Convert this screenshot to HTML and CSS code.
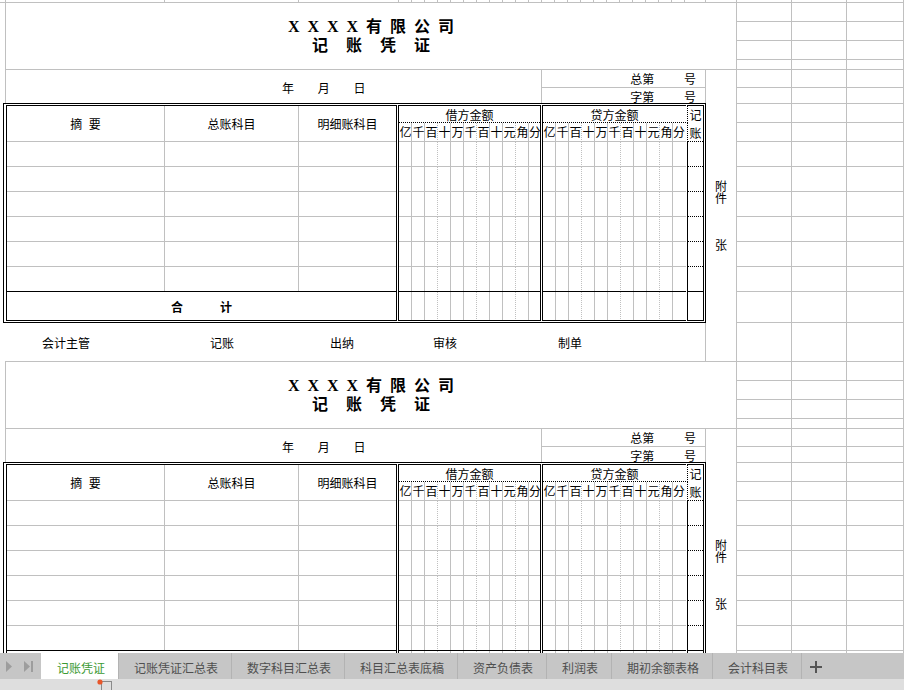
FILE: index.html
```html
<!DOCTYPE html>
<html lang="zh-CN">
<head>
<meta charset="utf-8">
<title>记账凭证</title>
<link rel="stylesheet" href="styles.css">
</head>
<body>
<div class="sheet">
  <div class="topstrip"></div>

  <section class="voucher">
    <div class="title"><div class="t1">X X X X 有 限 公 司</div><div class="t2">记 账 凭 证</div></div>
    <div class="daterow">
      <div class="date">年 月 日</div>
      <div class="nos"><div class="no">总第 号</div><div class="no">字第 号</div></div>
    </div>
    <div class="attach"><div class="fj">附件</div><div class="zhang">张</div></div>
    <div class="vt">
      <div class="lb">
        <div class="lh"><div class="c1">摘 要</div><div class="c2">总账科目</div><div class="c3">明细账科目</div></div>
        <div class="r lrow"></div><div class="r lrow"></div><div class="r lrow"></div><div class="r lrow"></div><div class="r lrow"></div>
        <div class="r6 lrow"></div>
        <div class="tot"><span>合</span><span>计</span></div>
      </div>
      <div class="db">
        <div class="ah">借方金额</div>
        <div class="dg amt"><span>亿</span><span>千</span><span>百</span><span>十</span><span>万</span><span>千</span><span>百</span><span>十</span><span>元</span><span>角</span><span>分</span></div>
        <div class="r amt"></div><div class="r amt"></div><div class="r amt"></div><div class="r amt"></div><div class="r amt"></div>
        <div class="r6 amt"></div>
        <div class="tot amt"></div>
      </div>
      <div class="cb">
        <div class="ah">贷方金额</div>
        <div class="dg amt"><span>亿</span><span>千</span><span>百</span><span>十</span><span>万</span><span>千</span><span>百</span><span>十</span><span>元</span><span>角</span><span>分</span></div>
        <div class="r amt"></div><div class="r amt"></div><div class="r amt"></div><div class="r amt"></div><div class="r amt"></div>
        <div class="r6 amt"></div>
        <div class="tot amt"></div>
      </div>
      <div class="jz">
        <div class="jh1">记</div><div class="jh2">账</div>
        <div class="jr"></div><div class="jr"></div><div class="jr"></div><div class="jr"></div><div class="jr"></div>
        <div class="jr6"></div><div class="jtot"></div>
      </div>
    </div>
    <div class="sign"><span>会计主管</span><span>记账</span><span>出纳</span><span>审核</span><span>制单</span></div>
    <div class="rgrid"><i></i><i></i><i></i><i></i><i></i><i></i><i></i><i></i><i></i><i></i><i></i><i></i><i></i><i></i><i></i><i></i><i></i><i></i><i></i><i></i><i></i><i></i><i></i><i></i><i></i><i></i><i></i><i></i><i></i><i></i><i></i><i></i><i></i><i></i><i></i><i></i><i></i><i></i><i></i><i></i><i></i><i></i><i></i><i></i><i></i><i></i><i></i><i></i></div>
  </section>

  <section class="voucher">
    <div class="title"><div class="t1">X X X X 有 限 公 司</div><div class="t2">记 账 凭 证</div></div>
    <div class="daterow">
      <div class="date">年 月 日</div>
      <div class="nos"><div class="no">总第 号</div><div class="no">字第 号</div></div>
    </div>
    <div class="attach"><div class="fj">附件</div><div class="zhang">张</div></div>
    <div class="vt">
      <div class="lb">
        <div class="lh"><div class="c1">摘 要</div><div class="c2">总账科目</div><div class="c3">明细账科目</div></div>
        <div class="r lrow"></div><div class="r lrow"></div><div class="r lrow"></div><div class="r lrow"></div><div class="r lrow"></div>
        <div class="r6 lrow"></div>
        <div class="tot"></div>
      </div>
      <div class="db">
        <div class="ah">借方金额</div>
        <div class="dg amt"><span>亿</span><span>千</span><span>百</span><span>十</span><span>万</span><span>千</span><span>百</span><span>十</span><span>元</span><span>角</span><span>分</span></div>
        <div class="r amt"></div><div class="r amt"></div><div class="r amt"></div><div class="r amt"></div><div class="r amt"></div>
        <div class="r6 amt"></div>
        <div class="tot amt"></div>
      </div>
      <div class="cb">
        <div class="ah">贷方金额</div>
        <div class="dg amt"><span>亿</span><span>千</span><span>百</span><span>十</span><span>万</span><span>千</span><span>百</span><span>十</span><span>元</span><span>角</span><span>分</span></div>
        <div class="r amt"></div><div class="r amt"></div><div class="r amt"></div><div class="r amt"></div><div class="r amt"></div>
        <div class="r6 amt"></div>
        <div class="tot amt"></div>
      </div>
      <div class="jz">
        <div class="jh1">记</div><div class="jh2">账</div>
        <div class="jr"></div><div class="jr"></div><div class="jr"></div><div class="jr"></div><div class="jr"></div>
        <div class="jr6"></div><div class="jtot"></div>
      </div>
    </div>
    <div class="sign"></div>
    <div class="rgrid"><i></i><i></i><i></i><i></i><i></i><i></i><i></i><i></i><i></i><i></i><i></i><i></i><i></i><i></i><i></i><i></i><i></i><i></i><i></i><i></i><i></i><i></i><i></i><i></i><i></i><i></i><i></i><i></i><i></i><i></i><i></i><i></i><i></i><i></i><i></i><i></i><i></i><i></i><i></i><i></i><i></i><i></i><i></i><i></i><i></i><i></i><i></i><i></i></div>
  </section>
</div>

<div class="tabbar">
  <div class="nav">
    <svg width="7" height="11" viewBox="0 0 7 11"><path d="M0 0L6 5.5L0 11Z" fill="#9d9d9d"/></svg>
    <svg width="9" height="11" viewBox="0 0 9 11"><path d="M0 0L6 5.5L0 11Z" fill="#9d9d9d"/><rect x="7" y="0" width="2" height="11" fill="#9d9d9d"/></svg>
  </div>
  <div class="tab active">记账凭证</div>
  <div class="tab">记账凭证汇总表</div>
  <div class="tab">数字科目汇总表</div>
  <div class="tab">科目汇总表底稿</div>
  <div class="tab">资产负债表</div>
  <div class="tab">利润表</div>
  <div class="tab">期初余额表格</div>
  <div class="tab">会计科目表</div>
  <div class="add"><svg width="12" height="12" viewBox="0 0 12 12"><path d="M6 0V12M0 6H12" stroke="#555" stroke-width="2"/></svg></div>
</div>
<div class="status">
  <svg class="sicon" width="16" height="11" viewBox="0 0 16 11"><rect x="4.5" y="2.5" width="10" height="9" fill="none" stroke="#8a8a8a"/><circle cx="3" cy="3" r="2.6" fill="#e8562a"/></svg>
</div>
</body>
</html>
```

FILE: styles.css
```css
* { box-sizing: border-box; }

body {
  margin: 0;
  width: 904px;
  height: 690px;
  overflow: hidden;
  background: #fff;
  color: #000;
  font-family: "Noto Sans CJK SC", "Noto Sans", sans-serif;
  font-size: 12px;
}

.sheet {
  height: 653px;
  overflow: hidden;
}

.topstrip {
  height: 3px;
  border-bottom: 1px solid #c0c0c0;
  background:
    linear-gradient(#c0c0c0, #c0c0c0) 5px 0 / 1px 100% no-repeat,
    linear-gradient(#c0c0c0, #c0c0c0) 164px 0 / 1px 100% no-repeat,
    linear-gradient(#c0c0c0, #c0c0c0) 298px 0 / 1px 100% no-repeat,
    repeating-linear-gradient(to right, #c0c0c0 0 1px, transparent 1px 13px) 398px 0 / 288px 100% no-repeat,
    linear-gradient(#c0c0c0, #c0c0c0) 705px 0 / 1px 100% no-repeat,
    linear-gradient(#c0c0c0, #c0c0c0) 736px 0 / 1px 100% no-repeat,
    linear-gradient(#c0c0c0, #c0c0c0) 791px 0 / 1px 100% no-repeat,
    linear-gradient(#c0c0c0, #c0c0c0) 846px 0 / 1px 100% no-repeat,
    linear-gradient(#c0c0c0, #c0c0c0) 903px 0 / 1px 100% no-repeat;
}

.voucher {
  --rows: 19px 19px 19px 10px 18px 16px 19px 19px 25px 25px 25px 25px 25px 25px 31px 39px;
  display: grid;
  grid-template-columns: 5px 700px 32px 55px 55px 57px;
  grid-template-rows: var(--rows);
}

/* title */
.title {
  grid-column: 2 / 4;
  grid-row: 1 / 5;
  border-left: 1px solid #c0c0c0;
  border-right: 1px solid #c0c0c0;
  border-bottom: 1px solid #c0c0c0;
  display: flex;
  flex-direction: column;
  justify-content: center;
  align-items: center;
  font-family: "Liberation Serif", "Noto Sans CJK SC", serif;
  font-weight: bold;
  font-size: 16px;
  line-height: 19px;
}
.t1 { word-spacing: 4px; }
.t2 { word-spacing: 14px; }

/* date + numbers */
.daterow {
  grid-column: 2;
  grid-row: 5 / 7;
  display: flex;
}
.date {
  width: 536px;
  border-left: 1px solid #c0c0c0;
  display: flex;
  align-items: center;
  padding-left: 276px;
  word-spacing: 21px;
}
.nos {
  flex: 1;
  border-left: 1px solid #c0c0c0;
  display: flex;
  flex-direction: column;
}
.no {
  display: flex;
  align-items: center;
  justify-content: flex-end;
  padding-right: 9px;
  word-spacing: 27px;
}
.no:first-child { height: 18px; border-bottom: 1px solid #c0c0c0; }
.no:last-child { flex: 1; }

/* attachment column */
.attach {
  grid-column: 3;
  grid-row: 5 / 17;
  border-left: 1px solid #c0c0c0;
  border-right: 1px solid #c0c0c0;
  border-bottom: 1px solid #c0c0c0;
  padding-top: 110px;
  display: flex;
  flex-direction: column;
  align-items: center;
}
.fj {
  writing-mode: vertical-rl;
  line-height: 13px;
}
.zhang {
  margin-top: 34px;
  line-height: 13px;
}

/* voucher table */
.vt {
  grid-column: 1 / 3;
  grid-row: 7 / 16;
  margin: -1px -1px 0 3px;
  border: 1px solid #000;
  padding: 1px 1px 1px 2px;
  display: flex;
  gap: 1px;
}

.lb {
  width: 391px;
  border: 1px solid #000;
  display: flex;
  flex-direction: column;
}
.lh {
  height: 36px;
  border-bottom: 1px solid #c0c0c0;
  display: flex;
}
.lh > div {
  display: flex;
  align-items: center;
  justify-content: center;
}
.c1 { width: 158px; border-right: 1px solid #c0c0c0; word-spacing: 4px; }
.c2 { width: 134px; border-right: 1px solid #c0c0c0; }
.c3 { flex: 1; }

.r { height: 25px; border-bottom: 1px solid #c0c0c0; }
.r6 { height: 24px; }
.tot { flex: 1; border-top: 1px solid #000; }

.lb .tot {
  display: flex;
  justify-content: center;
  align-items: center;
  gap: 37px;
  font-weight: bold;
}

.lrow {
  background:
    linear-gradient(#c0c0c0, #c0c0c0) 157px 0 / 1px 100% no-repeat,
    linear-gradient(#c0c0c0, #c0c0c0) 291px 0 / 1px 100% no-repeat;
}

.db {
  width: 143px;
  border: 1px solid #000;
  display: flex;
  flex-direction: column;
}
.cb {
  width: 144px;
  border: 1px solid #000;
  border-right: 0;
  display: flex;
  flex-direction: column;
}
.ah {
  height: 17px;
  border-bottom: 1px dotted #000;
  display: flex;
  align-items: center;
  justify-content: center;
}
.dg {
  height: 19px;
  border-bottom: 1px solid #c0c0c0;
  display: flex;
}
.dg span {
  flex: 0 0 13px;
  text-align: center;
  line-height: 18px;
}
.dg span:last-child {
  flex: 1 1 auto;
  min-width: 0;
  text-align: left;
}

.amt {
  background:
    linear-gradient(#c0c0c0, #c0c0c0) 12px 0 / 1px 100% no-repeat,
    linear-gradient(#c0c0c0, #c0c0c0) 25px 0 / 1px 100% no-repeat,
    repeating-linear-gradient(#c0c0c0 0 1px, transparent 1px 2px) 38px 0 / 1px 100% no-repeat,
    linear-gradient(#c0c0c0, #c0c0c0) 51px 0 / 1px 100% no-repeat,
    linear-gradient(#c0c0c0, #c0c0c0) 64px 0 / 1px 100% no-repeat,
    repeating-linear-gradient(#c0c0c0 0 1px, transparent 1px 2px) 77px 0 / 1px 100% no-repeat,
    linear-gradient(#c0c0c0, #c0c0c0) 90px 0 / 1px 100% no-repeat,
    linear-gradient(#c0c0c0, #c0c0c0) 103px 0 / 1px 100% no-repeat,
    repeating-linear-gradient(#c0c0c0 0 1px, transparent 1px 2px) 116px 0 / 1px 100% no-repeat,
    linear-gradient(#c0c0c0, #c0c0c0) 129px 0 / 1px 100% no-repeat;
}

.jz {
  flex: 1;
  border: 1px solid #000;
  border-left: 0;
  display: flex;
  flex-direction: column;
}
.jh1, .jh2 {
  border-left: 1px dotted #000;
  display: flex;
  align-items: center;
  justify-content: center;
}
.jh1 { height: 17px; }
.jh2 { height: 19px; border-bottom: 1px dotted #000; }
.jr { height: 25px; border-left: 1px solid #000; border-bottom: 1px dotted #000; }
.jr6 { height: 24px; border-left: 1px solid #000; }
.jtot { flex: 1; border-left: 1px solid #000; border-top: 1px solid #000; }

/* signatures */
.sign {
  grid-column: 2;
  grid-row: 16;
  border-bottom: 1px solid #c0c0c0;
  display: flex;
  align-items: center;
  padding-left: 37px;
}
.sign span:nth-child(2) { margin-left: 120px; }
.sign span:nth-child(3) { margin-left: 96px; }
.sign span:nth-child(4) { margin-left: 79px; }
.sign span:nth-child(5) { margin-left: 101px; }

/* right empty grid */
.rgrid {
  grid-column: 4 / 7;
  grid-row: 1 / 17;
  display: grid;
  grid-template-columns: 55px 55px 57px;
  grid-template-rows: var(--rows);
}
.rgrid i {
  border-right: 1px solid #c0c0c0;
  border-bottom: 1px solid #c0c0c0;
}

/* sheet tabs */
.tabbar {
  height: 26px;
  background: #c6c6c6;
  display: flex;
  color: #4f4f4f;
  font-size: 12px;
}
.nav {
  width: 41px;
  display: flex;
  align-items: center;
  padding-left: 6px;
  gap: 11px;
}
.tab {
  display: flex;
  align-items: center;
  padding: 2px 13px 0 15px;
  border-left: 1px solid #b3b3b3;
  white-space: nowrap;
}
.tab.active {
  background: #fff;
  border-left-color: #fff;
  color: #3c9a33;
}
.add {
  border-left: 1px solid #b3b3b3;
  display: flex;
  align-items: center;
  padding: 1px 0 0 8px;
  width: 32px;
}

.status {
  height: 11px;
  background: #dedede;
  display: flex;
  align-items: flex-end;
  padding-left: 97px;
}
.sicon { display: block; }
```
